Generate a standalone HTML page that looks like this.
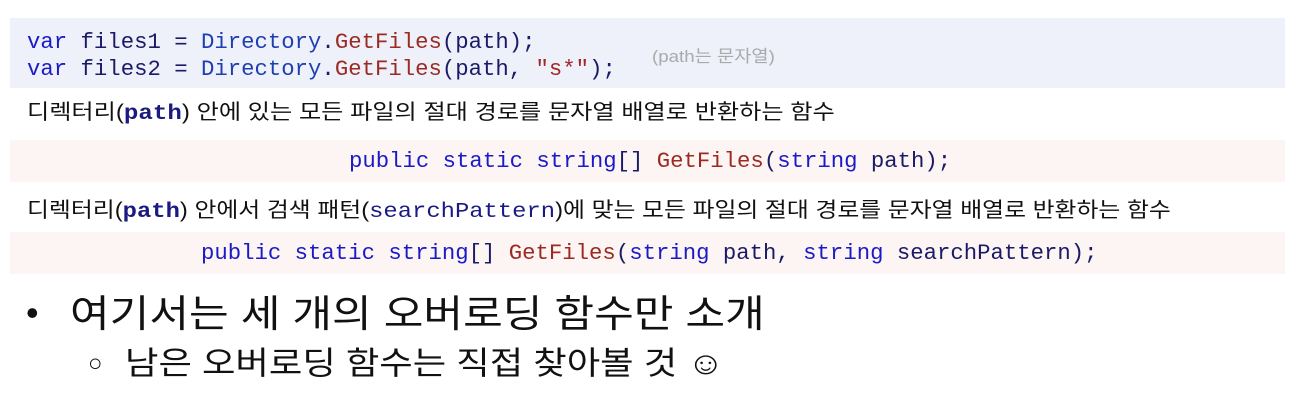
<!DOCTYPE html>
<html><head><meta charset="utf-8"><style>
body{margin:0;width:1307px;height:413px;background:#fff;position:relative;overflow:hidden;font-family:"Liberation Sans","Noto Sans CJK KR",sans-serif;color:#111}
.box{position:absolute;left:10px;width:1275px}
.code{font-family:"Liberation Mono",monospace;font-size:22.3px;position:absolute;white-space:pre;line-height:1}
.k{color:#1a1ac8}.t{color:#1f3fb0}.m{color:#9b2b22}.p{color:#1a1a66}.s{color:#a02828}
.kr{position:absolute;white-space:pre;transform-origin:left center;display:inline-block}
.b{font-family:"Liberation Mono",monospace;color:#1a1a80;font-weight:bold}
.sp{font-family:"Liberation Mono",monospace;color:#1a1a80}
</style></head><body>
<div class="box" style="top:18px;height:70px;background:#eef0fa"></div>
<div class="box" style="top:140px;height:42px;background:#fcf5f3"></div>
<div class="box" style="top:232px;height:42px;background:#fcf5f3"></div>

<div class="code" style="left:27px;top:31px"><span class="k">var</span> <span class="p">files1 = </span><span class="t">Directory</span><span class="p">.</span><span class="m">GetFiles</span><span class="p">(path);</span></div>
<div class="code" style="left:27px;top:58px"><span class="k">var</span> <span class="p">files2 = </span><span class="t">Directory</span><span class="p">.</span><span class="m">GetFiles</span><span class="p">(path, </span><span class="s">"s*"</span><span class="p">);</span></div>
<div class="kr" style="left:652px;top:42px;font-size:17px;color:#aaa;transform:scaleX(1.1)">(path는 문자열)</div>

<div class="kr" style="left:27px;top:96px;font-size:21px;transform:scaleX(1.15)">디렉터리(<span class="b">path</span>) 안에 있는 모든 파일의 절대 경로를 문자열 배열로 반환하는 함수</div>

<div class="code" style="left:349px;top:150px"><span class="k">public static string</span><span class="p">[] </span><span class="m">GetFiles</span><span class="p">(</span><span class="k">string</span><span class="p"> path);</span></div>

<div class="kr" style="left:27px;top:194px;font-size:21px;transform:scaleX(1.135)">디렉터리(<span class="b">path</span>) 안에서 검색 패턴(<span class="sp">searchPattern</span>)에 맞는 모든 파일의 절대 경로를 문자열 배열로 반환하는 함수</div>

<div class="code" style="left:201px;top:242px"><span class="k">public static string</span><span class="p">[] </span><span class="m">GetFiles</span><span class="p">(</span><span class="k">string</span><span class="p"> path, </span><span class="k">string</span><span class="p"> searchPattern);</span></div>

<div class="kr" style="left:26px;top:292px;font-size:36px">•</div>
<div class="kr" style="left:70px;top:283px;font-size:38px;transform:scaleX(1.135)">여기서는 세 개의 오버로딩 함수만 소개</div>
<div class="kr" style="left:88px;top:350px;font-size:24px">○</div>
<div class="kr" style="left:125px;top:338px;font-size:32px;transform:scaleX(1.136)">남은 오버로딩 함수는 직접 찾아볼 것 ☺</div>
</body></html>
